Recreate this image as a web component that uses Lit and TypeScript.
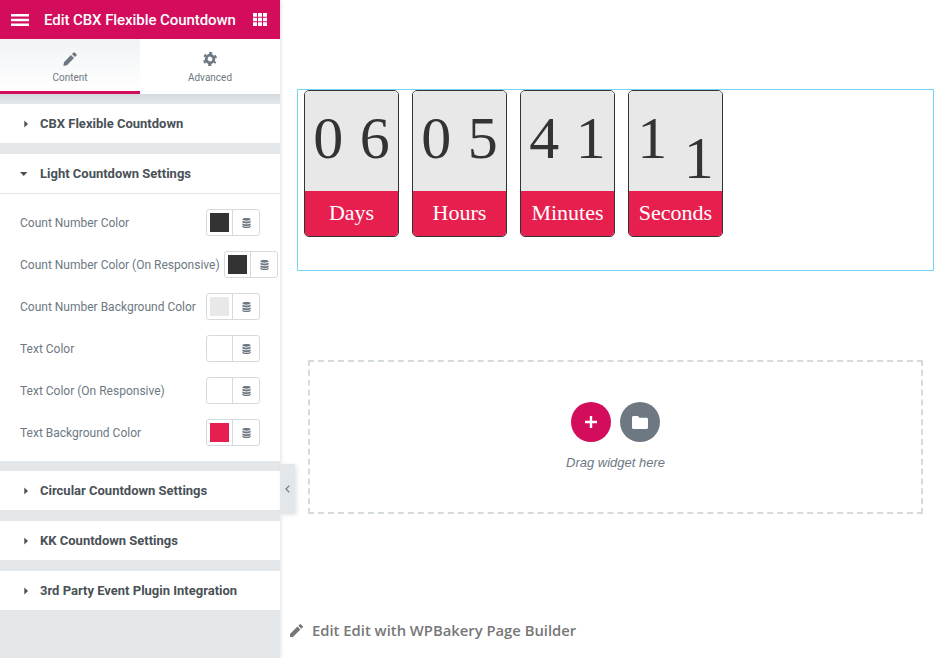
import { LitElement, css, html, nothing } from 'lit';
import { customElement } from 'lit/decorators.js';

const caret = (open: boolean) => html`
  <svg class="caret" width="8" height="8" viewBox="0 0 8 8">
    <path fill="currentColor" d=${open ? 'M0 2h7.400L3.700 6z' : 'M4.300 .4 8 4 4.300 7.600z'}></path>
  </svg>`;

const dbIcon = html`
  <svg width="9" height="10" viewBox="0 0 10 11" preserveAspectRatio="none">
    <path fill="#6d7882" d="M5 0c2.600 0 4.600.6 4.600 1.500S7.600 3 5 3 .4 2.400.4 1.500 2.400 0 5 0zM.4 2.700C1.200 3.500 3 3.900 5 3.900s3.800-.4 4.600-1.200v1.700C9.600 5.300 7.600 6 5 6S.4 5.300.4 4.400zM.4 5.700C1.200 6.500 3 6.900 5 6.900s3.800-.4 4.600-1.200v1.800C9.600 8.400 7.600 9 5 9S.4 8.400.4 7.500zM.4 8.300C1.200 9.100 3 9.700 5 9.700c2 0 3.800-.6 4.600-1.400v1.200C9.600 10.400 7.600 11 5 11S.4 10.400.4 9.500z"></path>
  </svg>`;

const colorRows = [
  { label: 'Count Number Color', color: '#333333' },
  { label: 'Count Number Color (On Responsive)', color: '#333333', wide: true },
  { label: 'Count Number Background Color', color: '#e8e8e8' },
  { label: 'Text Color', color: '#ffffff' },
  { label: 'Text Color (On Responsive)', color: '#ffffff' },
  { label: 'Text Background Color', color: '#e61f4f' },
];

const timers = [
  { digits: ['0', '6'], label: 'Days' },
  { digits: ['0', '5'], label: 'Hours' },
  { digits: ['4', '1'], label: 'Minutes' },
  { digits: ['1', '1'], label: 'Seconds', rolling: true },
];

@customElement('app-root')
export class AppRoot extends LitElement {
  static styles = css`
    :host {
      display: flex;
      position: relative;
      width: 940px;
      height: 658px;
      overflow: hidden;
      background: #fff;
      font-family: Roboto, sans-serif;
    }

    .panel {
      width: 280px;
      height: 658px;
      flex: none;
      background: #e4e7ea;
      box-shadow: 1px 0 4px rgba(0, 0, 0, 0.12);
      position: relative;
    }

    .topbar {
      height: 39px;
      background: #d30c5c;
      color: #fff;
      display: flex;
      align-items: center;
      padding: 0 13px 0 11px;
    }
    .topbar h1 {
      flex: 1;
      margin: 0 0 0 15px;
      font-size: 15px;
      font-weight: 500;
      letter-spacing: -0.07px;
      white-space: nowrap;
    }

    .tabs {
      display: flex;
      height: 55px;
      background: #fff;
    }
    .tab {
      width: 140px;
      box-sizing: border-box;
      display: flex;
      flex-direction: column;
      align-items: center;
      padding-top: 13px;
      font-size: 10px;
      color: #6d7882;
    }
    .tab svg {
      height: 14px;
      margin-bottom: 6px;
    }
    .tab.active {
      background: linear-gradient(#f1f3f5, #fff);
      border-bottom: 3px solid #d30c5c;
    }

    .shade {
      height: 10px;
      background: linear-gradient(#d5dadf, #e4e7ea);
    }

    .section {
      height: 39px;
      background: #fff;
      display: flex;
      align-items: center;
      padding-left: 20px;
      margin-bottom: 11px;
      font-size: 13px;
      font-weight: 700;
      color: #495157;
    }
    .section.open {
      height: 40px;
      margin-bottom: 0;
      box-sizing: border-box;
      border-bottom: 1px solid #e4e7ea;
    }
    .caret {
      width: 8px;
      flex: none;
      margin-right: 12px;
      color: #495157;
    }

    .controls {
      background: #fff;
      padding: 7.5px 0;
      margin-bottom: 10px;
    }
    .row {
      height: 42px;
      display: flex;
      align-items: center;
      justify-content: space-between;
      padding: 0 20px;
      font-size: 12px;
      color: #6d7882;
      white-space: nowrap;
    }
    .row.wide {
      padding-right: 2px;
    }

    .picker {
      box-sizing: border-box;
      width: 54px;
      height: 27px;
      flex: none;
      display: flex;
      border: 1px solid #d5dadf;
      border-radius: 3px;
    }
    .well {
      width: 26px;
      flex: none;
      display: flex;
      align-items: center;
      justify-content: center;
      box-sizing: border-box;
      border-right: 1px solid #d5dadf;
    }
    .swatch {
      width: 19px;
      height: 19px;
    }
    .db {
      flex: 1;
      display: flex;
      align-items: center;
      justify-content: center;
    }

    .handle {
      position: absolute;
      left: 280px;
      top: 464px;
      width: 15px;
      height: 50px;
      background: #e4e7ea;
      box-shadow: 2px 1px 4px rgba(0, 0, 0, 0.1);
      display: flex;
      align-items: center;
      justify-content: center;
    }

    .canvas {
      flex: 1;
      min-width: 0;
      padding: 89px 6px 0 17px;
      display: flex;
      flex-direction: column;
    }

    .widget {
      box-sizing: border-box;
      height: 182px;
      border: 1px solid #71d7f7;
      display: flex;
      gap: 13px;
      padding-left: 6px;
      align-items: flex-start;
    }
    .timer {
      box-sizing: border-box;
      width: 95px;
      height: 147px;
      border: 1px solid #333;
      border-radius: 5px;
      overflow: hidden;
      font-family: 'Liberation Serif', serif;
    }
    .digits {
      height: 100px;
      background: #e8e8e8;
      display: flex;
      color: #333;
      font-size: 60px;
      line-height: 95px;
    }
    .digits span {
      flex: 1;
      text-align: center;
    }
    .digits .roll {
      transform: translateY(20px);
    }
    .name {
      height: 45px;
      background: #e61f4f;
      color: #fff;
      font-size: 22px;
      line-height: 44px;
      text-align: center;
    }

    .dropzone {
      box-sizing: border-box;
      height: 154px;
      margin: 89px 11px 0 11px;
      border: 2px dashed #d5dadf;
      display: flex;
      flex-direction: column;
      align-items: center;
      padding-top: 40px;
    }
    .buttons {
      display: flex;
      gap: 9px;
    }
    .round {
      width: 40px;
      height: 40px;
      border-radius: 50%;
      display: flex;
      align-items: center;
      justify-content: center;
    }
    .round.add {
      background: #d30c5c;
    }
    .round.lib {
      background: #6d7882;
    }
    .hint {
      margin-top: 13px;
      font-family: 'Liberation Sans', sans-serif;
      font-style: italic;
      font-size: 13px;
      color: #6d7882;
    }

    .edit-link {
      display: flex;
      align-items: center;
      gap: 9px;
      margin: 106px 0 0 -7px;
      font-family: 'Open Sans', sans-serif;
      font-size: 14.8px;
      font-weight: 600;
      color: #777;
      white-space: nowrap;
    }
  `;

  private renderSection(title: string, open = false) {
    return html`<div class="section ${open ? 'open' : ''}">${caret(open)}${title}</div>`;
  }

  render() {
    return html`
      <aside class="panel">
        <div class="topbar">
          <svg width="18" height="12" viewBox="0 0 18 12">
            <path fill="#fff" d="M0 0h18v2.400H0zM0 4.800h18v2.400H0zM0 9.600h18V12H0z"></path>
          </svg>
          <h1>Edit CBX Flexible Countdown</h1>
          <svg width="14" height="13" viewBox="0 0 14 14" preserveAspectRatio="none">
            <path fill="#fff" d="M0 0h4v4H0zM5 0h4v4H5zM10 0h4v4h-4zM0 5h4v4H0zM5 5h4v4H5zM10 5h4v4h-4zM0 10h4v4H0zM5 10h4v4H5zM10 10h4v4h-4z"></path>
          </svg>
        </div>
        <div class="tabs">
          <div class="tab active">
            <svg width="14" height="14" viewBox="0 0 14 14">
              <path fill="#6d7882" d="M10.300.7a1.200 1.200 0 0 1 1.700 0l1.300 1.300a1.200 1.200 0 0 1 0 1.700l-1.400 1.400-3-3zM7.900 3 11 6.100 4 13.200.4 14 1 10.200z"></path>
            </svg>
            Content
          </div>
          <div class="tab">
            <svg width="14" height="14" viewBox="0 0 14 14">
              <g fill="none" stroke="#6d7882" transform="rotate(30 7 7)">
                <circle cx="7" cy="7" r="3.800" stroke-width="2.800"></circle>
                <circle cx="7" cy="7" r="6" stroke-width="2" stroke-dasharray="3 3.280" stroke-dashoffset="1.500"></circle>
              </g>
            </svg>
            Advanced
          </div>
        </div>
        <div class="shade"></div>

        ${this.renderSection('CBX Flexible Countdown')}
        ${this.renderSection('Light Countdown Settings', true)}
        <div class="controls">
          ${colorRows.map(
            (r) => html`
              <div class="row ${r.wide ? 'wide' : ''}">
                <span>${r.label}</span>
                <div class="picker">
                  <div class="well">
                    <div class="swatch" style="background:${r.color}"></div>
                  </div>
                  <div class="db">${dbIcon}</div>
                </div>
              </div>
            `,
          )}
        </div>
        ${this.renderSection('Circular Countdown Settings')}
        ${this.renderSection('KK Countdown Settings')}
        ${this.renderSection('3rd Party Event Plugin Integration')}
      </aside>

      <div class="handle">
        <svg width="5" height="8" viewBox="0 0 5 8">
          <path fill="none" stroke="#6d7882" stroke-width="1.200" d="M4.300 .6 1 4l3.300 3.400"></path>
        </svg>
      </div>

      <main class="canvas">
        <div class="widget">
          ${timers.map(
            (t) => html`
              <div class="timer">
                <div class="digits">
                  <span>${t.digits[0]}</span>
                  <span class=${t.rolling ? 'roll' : nothing}>${t.digits[1]}</span>
                </div>
                <div class="name">${t.label}</div>
              </div>
            `,
          )}
        </div>

        <div class="dropzone">
          <div class="buttons">
            <div class="round add">
              <svg width="12" height="12" viewBox="0 0 12 12">
                <path fill="#fff" d="M4.800 0h2.400v4.800H12v2.400H7.200V12H4.800V7.200H0V4.800h4.800z"></path>
              </svg>
            </div>
            <div class="round lib">
              <svg width="16" height="13" viewBox="0 0 16 13">
                <path fill="#fff" d="M1.500 0h4.300l1.700 1.800h7c.8 0 1.500.7 1.500 1.500v8.200c0 .8-.7 1.500-1.500 1.500h-13C.7 13 0 12.300 0 11.500v-10C0 .7.700 0 1.500 0z"></path>
              </svg>
            </div>
          </div>
          <div class="hint">Drag widget here</div>
        </div>

        <div class="edit-link">
          <svg width="13" height="13" viewBox="0 0 13 13">
            <path fill="#777" d="M9.600.4a1 1 0 0 1 1.400 0l1.600 1.600a1 1 0 0 1 0 1.400L11.300 4.700 8.300 1.700zM7.400 2.600l3 3L3 13H0v-3z"></path>
          </svg>
          Edit Edit with WPBakery Page Builder
        </div>
      </main>
    `;
  }
}
